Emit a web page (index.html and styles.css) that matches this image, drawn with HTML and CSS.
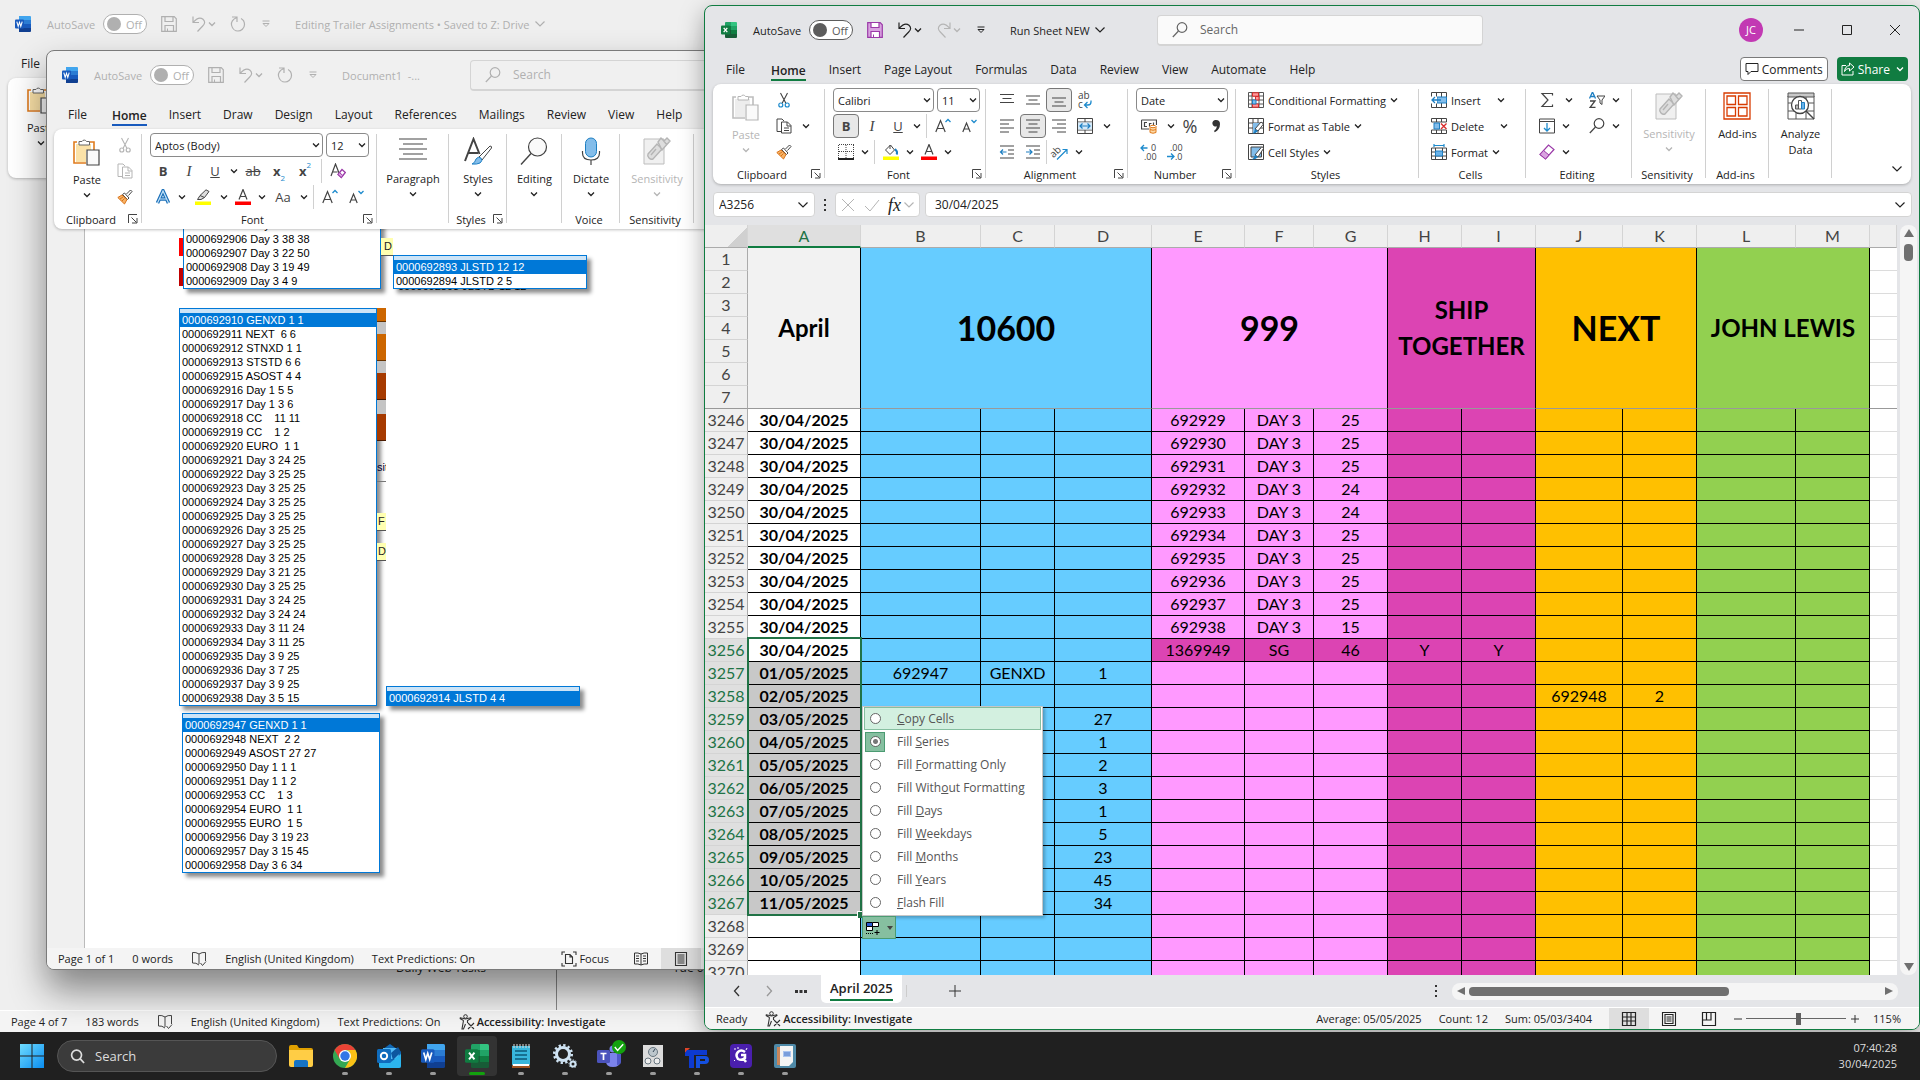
FILE: index.html
```html
<!DOCTYPE html>
<html lang="en-GB">
<head>
  <meta charset="UTF-8" />
  <title>Run Sheet NEW</title>
  <link rel="stylesheet" href="styles.css">
</head>
<body>
  <!-- icon sprite -->
  <svg class="sprite" aria-hidden="true">
    <symbol id="caret" viewBox="0 0 8 8"><path d="M1 2.5 4 5.5 7 2.5" fill="none" stroke="currentColor" stroke-width="1.3"/></symbol>
    <symbol id="chev" viewBox="0 0 12 12"><path d="M1.5 3.5 6 8 10.5 3.5" fill="none" stroke="currentColor" stroke-width="1.2"/></symbol>
    <symbol id="custom" viewBox="0 0 8 8"><path d="M.5 1h7M1 3.5 4 6.5 7 3.5z" fill="none" stroke="currentColor"/></symbol>
    <symbol id="word" viewBox="0 0 16 16"><path d="M4 0h11q1 0 1 1v3H4z" fill="#41a5ee"/><path d="M4 4h12v4H4z" fill="#2b7cd3"/><path d="M4 8h12v4H4z" fill="#185abd"/><path d="M4 12h12v3q0 1-1 1H4z" fill="#103f91"/><rect y="3.500" width="9" height="9" rx="1" fill="#185abd"/><path d="M1.800 5.700 3.200 10.300 4.500 6.200 5.800 10.300 7.200 5.700" fill="none" stroke="#fff" stroke-width="1.100"/></symbol>
    <symbol id="excel" viewBox="0 0 16 16"><path d="M4 1q0-1 1-1h5v4H4z" fill="#21a366"/><path d="M10 0h5q1 0 1 1v3h-6z" fill="#33c481"/><path d="M4 4h6v4H4z" fill="#107c41"/><path d="M10 4h6v4h-6z" fill="#21a366"/><path d="M4 8h6v8H5q-1 0-1-1z" fill="#185c37"/><path d="M10 8h6v4h-6z" fill="#107c41"/><path d="M10 12h6v3q0 1-1 1h-5z" fill="#185c37"/><rect y="3.500" width="9" height="9" rx="1" fill="#107c41"/><path d="M2.700 5.800 6.300 10.200M6.300 5.800 2.700 10.200" stroke="#fff" stroke-width="1.300"/></symbol>
    <symbol id="save" viewBox="0 0 16 16"><path d="M.7.7h12.500l2.100 2.100v12.500H.7z" fill="var(--fill,none)" stroke="currentColor" stroke-width="1.200"/><path d="M4 1v4.500h8V1M4 15V9.500h8.500V15" fill="var(--fill2,none)" stroke="currentColor" stroke-width="1.200"/><path d="M6.500 12.500v2.500" stroke="currentColor"/></symbol>
    <symbol id="undo" viewBox="0 0 16 16"><path d="M2 .5v6h6M2.300 6.200C6 2 9 .8 12 3.300c2.500 2.200 1.800 4.700-.3 6.700L6.500 15.500" fill="none" stroke="currentColor" stroke-width="1.200"/></symbol>
    <symbol id="redo" viewBox="0 0 16 16"><path d="M14 .5v6H8M13.700 6.200C10 2 7 .8 4 3.300 1.500 5.500 2.200 8 4.300 10l5.200 5.500" fill="none" stroke="currentColor" stroke-width="1.200"/></symbol>
    <symbol id="repeat" viewBox="0 0 16 16"><path d="M2 1h5v5M7 1.500C2.500 3 1 6.500 1.500 9c.7 3.500 3.500 6 6.500 6s6.500-2.500 6.500-6.500c0-2.500-1.500-5-3.500-6" fill="none" stroke="currentColor" stroke-width="1.200"/></symbol>
    <symbol id="search" viewBox="0 0 16 16"><circle cx="10" cy="5.500" r="4.800" fill="none" stroke="currentColor" stroke-width="1.200"/><path d="M6.500 9 .8 15" stroke="currentColor" stroke-width="1.200"/></symbol>
    <symbol id="paste" viewBox="0 0 28 28"><path d="M4 4H1v21h12M17 4h4v8" fill="none" stroke="var(--edge,#e07b1c)" stroke-width="1.600"/><path d="M3 6h15v6h-5v12H3z" fill="var(--board,#fbe2a8)"/><path d="M6 7V3.500h3a2.500 2.500 0 0 1 4.500 0h3V7z" fill="#fff" stroke="var(--line,#666)"/><path d="M14 12h12v15H14z" fill="#fafafa" stroke="var(--line,#444)" stroke-width="1.200"/></symbol>
    <symbol id="cut" viewBox="0 0 16 16"><path d="M4.500 1 10 11.500M11.500 1 6 11.500" fill="none" stroke="currentColor" stroke-width="1.100"/><circle cx="4.800" cy="13" r="2" fill="none" stroke="var(--b,currentColor)" stroke-width="1.200"/><circle cx="11.200" cy="13" r="2" fill="none" stroke="var(--b,currentColor)" stroke-width="1.200"/></symbol>
    <symbol id="copy" viewBox="0 0 16 16"><path d="M5.500 13.500H1V1h5l2 2M5.500 4h6L15 7.500V15H5.500zM11 4v4h4M8 10h5M8 12.500h5" fill="none" stroke="currentColor"/></symbol>
    <symbol id="brush" viewBox="0 0 16 16"><path d="m9.500 5 4-4 1.500 1.500-3.500 4" fill="#fff" stroke="#444"/><path d="M7.500 4 12 9l-1.500 1.500L5.500 5.500z" fill="#fff" stroke="#444"/><path d="M5 6 .8 8.500 7.500 15 10 10.500z" fill="#f7b366" stroke="#d9731a"/><path d="m3 10 3-2M5 12l2.500-2.500" stroke="#d9731a"/></symbol>
    <symbol id="launch" viewBox="0 0 10 10"><path d="M.5 9V.5H9M3.500 3.500l5 5M9 4v5H4" fill="none" stroke="#444"/></symbol>
    <symbol id="clear" viewBox="0 0 16 16"><path d="M1 13 5.500 1 9 10M2.500 9h5" fill="none" stroke="#444" stroke-width="1.200"/><path d="m8 11.500 4-5 3.300 3-4 5z" fill="#fff" stroke="#9b3aa8" stroke-width="1.300"/><path d="m8 11.500 1.500-2 3.300 3-1.500 2z" fill="#d9a3e0" stroke="#9b3aa8"/></symbol>
    <symbol id="hilite" viewBox="0 0 16 16"><path d="M5 6.500 11 .8 14 2.500 9.500 8.500zM5 6.500 2.500 10.500H6L9.500 8.500" fill="#ddd" stroke="#444"/><path d="M0 12.500h16v3.500H0z" fill="#ff0"/></symbol>
    <symbol id="bucket" viewBox="0 0 16 16"><path d="m2.500 6 5-5 4 5-4.500 4.500zM7 1v4" fill="none" stroke="#444"/><path d="M12 5c2 2 2.500 4 1.500 5.500" fill="none" stroke="#1e7fc2" stroke-width="2"/><path d="M0 12.500h16v3.500H0z" fill="#ff0"/></symbol>
    <symbol id="fcolor" viewBox="0 0 16 16"><path d="M4 10.500 8 .5l4 10M5.200 7.500h5.600" fill="none" stroke="#444" stroke-width="1.200"/><path d="M0 12.500h16v3.500H0z" fill="red"/></symbol>
    <symbol id="effect" viewBox="0 0 16 16"><path d="M2.500 14 8 2l5.500 12M4.500 10h7" fill="none" stroke="#1a6fb8" stroke-width="3.600"/><path d="M2.500 14 8 2l5.500 12M4.500 10h7" fill="none" stroke="#c4e2f8" stroke-width="1.200"/></symbol>
    <symbol id="grow" viewBox="0 0 16 16"><path d="M.8 14 5.500 2.500 10.200 14M2.300 10.500h6.400" fill="none" stroke="#444" stroke-width="1.200"/><path d="m10.500 4 2.500-2.500L15.500 4" fill="none" stroke="#1e8bcd" stroke-width="1.300"/></symbol>
    <symbol id="shrink" viewBox="0 0 16 16"><path d="M1.800 14 5.500 5 9.200 14M3 11h5" fill="none" stroke="#444" stroke-width="1.200"/><path d="m10.500 2 2.500 2.500L15.500 2" fill="none" stroke="#1e8bcd" stroke-width="1.300"/></symbol>
    <symbol id="borders" viewBox="0 0 16 16"><path d="M.5 1v13M8 1v13M15.500 1v13M1 .5h15M1 7.500h15" fill="none" stroke="#444" stroke-dasharray="1 1"/><path d="M0 15h16" stroke="#222" stroke-width="2"/></symbol>
    <symbol id="vtop" viewBox="0 0 16 16"><path d="M1 2.500h14M3.500 6.500h9M1 10.500h14" stroke="#444" stroke-width="1.200"/></symbol>
    <symbol id="vmid" viewBox="0 0 16 16"><path d="M1 4h14M3.500 8h9M1 12h14" stroke="#444" stroke-width="1.200"/></symbol>
    <symbol id="vbot" viewBox="0 0 16 16"><path d="M1 6h14M3.500 10h9M1 14h14" stroke="#444" stroke-width="1.200"/></symbol>
    <symbol id="left" viewBox="0 0 16 16"><path d="M1 2h14M1 6h9M1 10h14M1 14h9" stroke="#444" stroke-width="1.200"/></symbol>
    <symbol id="center" viewBox="0 0 16 16"><path d="M1 2h14M3.500 6h9M1 10h14M3.500 14h9" stroke="#444" stroke-width="1.200"/></symbol>
    <symbol id="right" viewBox="0 0 16 16"><path d="M1 2h14M6 6h9M1 10h14M6 14h9" stroke="#444" stroke-width="1.200"/></symbol>
    <symbol id="merge" viewBox="0 0 16 16"><path d="M.5.500h15v15H.5zM8 .5v3.500M8 12v3.500M.5 4h15M.5 12h15" fill="none" stroke="#444"/><path d="M1 4.500h14v7H1z" fill="#d4eafa"/><path d="M3 8h10M5.500 5.500 3 8l2.500 2.500M10.500 5.500 13 8l-2.500 2.500" fill="none" stroke="#1e7fc2" stroke-width="1.200"/></symbol>
    <symbol id="outdent" viewBox="0 0 16 16"><path d="M1 2h14M9 6h6M9 10h6M1 14h14" stroke="#444" stroke-width="1.200"/><path d="M7.500 8H1.500M4 5.500 1.500 8 4 10.500" fill="none" stroke="#1e7fc2" stroke-width="1.200"/></symbol>
    <symbol id="indent" viewBox="0 0 16 16"><path d="M1 2h14M9 6h6M9 10h6M1 14h14" stroke="#444" stroke-width="1.200"/><path d="M1 8h6M4.500 5.500 7 8 4.500 10.500" fill="none" stroke="#1e7fc2" stroke-width="1.200"/></symbol>
    <symbol id="currency" viewBox="0 0 16 16"><path d="M.5 2h15v5M.5 2v9H8M6 4.500H3.500v4H6M8.500 8.500v-3h2M12.500 7V4.500" fill="none" stroke="#444" stroke-width="1.200"/><path d="M9 8.500v6q3 1.500 6 0v-6M9 11.500q3 1.500 6 0" fill="#fbd9a8" stroke="#e07b1c"/><ellipse cx="12" cy="8.500" rx="3" ry="1.200" fill="#fff" stroke="#e07b1c"/></symbol>
    <symbol id="cond" viewBox="0 0 16 16"><path d="M.5.500h15v15H.5zM.5 4h15M.5 8h15M.5 12h15M4 .5v15M11 .5v15" fill="#fff" stroke="#555"/><path d="M4.500.8h6v3.400h-6zM4.500 12h6v3.200h-6zM7.500 4.500h3.500v3.500H7.500z" fill="#ff9a9a" stroke="#d92c2c"/><path d="M4.500 8H8v4H4.500z" fill="#7cc0f0" stroke="#1e7fc2"/></symbol>
    <symbol id="fmttable" viewBox="0 0 16 16"><path d="M.5.500h15v15H.5zM.5 5h15M.5 10h15M5 .5v15M10 .5v15" fill="#fff" stroke="#444"/><path d="M5 5h9l-7 10H5z" fill="#83bdea"/><path d="m7 11 6-7 2.500 2L10 13z" fill="#fff" stroke="#444"/><path d="M4.500 15.500q2-1 2.500-4.500l3 2q-2 2.500-5.500 2.500z" fill="#1e7fc2"/></symbol>
    <symbol id="cellstyle" viewBox="0 0 16 16"><path d="M.5.500h15v15H.5z" fill="#fff" stroke="#444"/><path d="M3 3h10.500v10H3z" fill="#83bdea" stroke="#444"/><path d="m7 11 7-8.500 1.500 2L10 13z" fill="#fff" stroke="#444"/><path d="M3.500 15.500q2.500-1 3.500-4.500l3 2q-2 2.500-6.500 2.500z" fill="#1e7fc2"/></symbol>
    <symbol id="cinsert" viewBox="0 0 16 16"><path d="M.5.500h15v15H.5zM5.500.500v15M10.500.500v15" fill="#fff" stroke="#444"/><path d="M6 5h9.500v6H6z" fill="#83bdea" stroke="#1e7fc2"/><path d="M0 4.500h6v7H0z" fill="#fff"/><path d="M10 8H1M4 5 1 8l3 3" fill="none" stroke="#1e7fc2" stroke-width="1.300"/></symbol>
    <symbol id="cdelete" viewBox="0 0 16 16"><path d="M.5 4V.500h15V4M.5 12v3.500h15V12M5.500.500v3.500M10.500.500v3.500M5.500 12v3.500M10.500 12v3.500M.5 4h15M.5 12h15" fill="none" stroke="#444"/><path d="M3 5h5.500v6H3z" fill="#83bdea" stroke="#1e7fc2"/><path d="m10 5.500 5.500 5.500M15.500 5.500 10 11" stroke="#d92c2c" stroke-width="1.400"/></symbol>
    <symbol id="cformat" viewBox="0 0 16 16"><path d="M.5 4v11.500h15V4zM.5 8h15M.5 12h15M4.500 4v11.500M11.500 4v11.500" fill="#fff" stroke="#444"/><path d="M4.500 7h7v5h-7z" fill="#6bb2e8" stroke="#1e7fc2"/><path d="M3 1.500h10M3 0v3M13 0v3" stroke="#1e8bcd" stroke-width="1.200"/></symbol>
    <symbol id="sigma" viewBox="0 0 16 16"><path d="M13.500 3.500V1.500H3L9 8l-6 6.500h10.500v-2" fill="none" stroke="#444" stroke-width="1.200"/></symbol>
    <symbol id="sort" viewBox="0 0 16 16"><path d="m.5 6.500 3-6.500 3 6.500M1.500 4.500h4" fill="none" stroke="#1e7fc2" stroke-width="1.300"/><path d="M1 9h5L1 15.500h5.500" fill="none" stroke="#444" stroke-width="1.300"/><path d="M8 4h8l-3 4v4.500l-2-1.500V8z" fill="none" stroke="#444"/></symbol>
    <symbol id="filld" viewBox="0 0 16 16"><path d="M.5 1h15v14H.5zM.5 3.500h15" fill="none" stroke="#444"/><path d="M8 5v8M5 10l3 3 3-3" fill="none" stroke="#1e8bcd" stroke-width="1.300"/></symbol>
    <symbol id="eraser" viewBox="0 0 16 16"><path d="M1 10.500 9.500 1l5.500 4.500L6.500 15z" fill="#fff" stroke="#9b3aa8" stroke-width="1.200"/><path d="M1 10.500 4.500 6.500 10 11l-3.500 4z" fill="#d9a3e0" stroke="#9b3aa8"/></symbol>
    <symbol id="sens" viewBox="0 0 28 28"><path d="M1 2h20v25H1z" fill="#f0f0f0" stroke="#bdbdbd"/><path d="m5 17 9-10 5 5-9 10q-2 1-4-1t-1-4zM8 18l5-6" fill="#ddd" stroke="#b5b5b5" stroke-width="1.400"/><path d="m15 5 3-4 3 3 3-3 3 3-8 9zM20 3l4 5" fill="#ddd" stroke="#b5b5b5" stroke-width="1.400"/></symbol>
    <symbol id="addins" viewBox="0 0 28 28"><path d="M1 1h26v26H1zM4 4h8.500v8.500H4zM15.500 4H24v8.500h-8.500zM4 15.500h8.500V24H4zM15.500 15.500H24V24h-8.500z" fill="none" stroke="#d83b01" stroke-width="1.300"/></symbol>
    <symbol id="analyze" viewBox="0 0 28 28"><path d="M1 4h26v23H1zM1 11h26M1 19h26M9 4v23M19 4v23" fill="#fff" stroke="#555"/><path d="M1 1h26v4H1z" fill="#c8c8c8" stroke="#555"/><circle cx="13" cy="13" r="8.500" fill="#fff" stroke="#444" stroke-width="1.300"/><path d="m19 19 8 8" stroke="#444" stroke-width="1.500"/><path d="M8.500 13h3v4h-3z" fill="#bbb" stroke="#555"/><path d="M11.500 8.500h3v8.500h-3z" fill="#fff" stroke="#555"/><path d="M14.500 10.500h3v6.500h-3z" fill="#6bb2e8" stroke="#1e7fc2"/></symbol>
    <symbol id="para" viewBox="0 0 28 28"><path d="M0 2h28M4 7h20M0 12h28M4 17h20M0 22h28" stroke="#444" stroke-width="1.200"/></symbol>
    <symbol id="styles" viewBox="0 0 28 28"><path d="M1 24 9.500 2l6 15M4 16h10" fill="none" stroke="#444" stroke-width="2"/><path d="m15 20 11-11q2 0 1.500 2L18 23z" fill="#fff" stroke="#444"/><path d="M8 27q3-1 4-5 2-3 5-1 2 3-1 5-3 1.500-8 1z" fill="#83bdea" stroke="#1e7fc2"/></symbol>
    <symbol id="find" viewBox="0 0 28 28"><circle cx="17.500" cy="10" r="9" fill="#fafafa" stroke="#444" stroke-width="1.200"/><path d="M11 16.500 1 27.500" stroke="#444" stroke-width="1.400"/></symbol>
    <symbol id="mic" viewBox="0 0 28 28"><rect x="8.500" y="1" width="11" height="19" rx="5.500" fill="#83bdea" stroke="#1e7fc2"/><path d="M5.500 14v2q0 7 8.500 7t8.500-7v-2M14 23v5" fill="none" stroke="#444" stroke-width="1.200"/></symbol>
    <symbol id="comment" viewBox="0 0 14 14"><path d="M1 1.500h12v8H6l-3 3v-3H1z" fill="none" stroke="currentColor"/></symbol>
    <symbol id="share" viewBox="0 0 14 14"><path d="M5 3.500H1v9.500h11V9M8.500 1 13 5 8.500 9V6.500Q5 6 3.500 9.500 4 4 8.500 3.500z" fill="none" stroke="currentColor"/></symbol>
    <symbol id="book" viewBox="0 0 16 16"><path d="M8 3Q5 1 1.500 1.500V12q3.500-.5 6.500 2M8 3v10M8 3q3-2 6.500-1.500V10M9.500 12l2 2.500 3.500-4" fill="none" stroke="#444"/></symbol>
    <symbol id="access" viewBox="0 0 16 16"><circle cx="6.500" cy="2.500" r="1.800" fill="none" stroke="#333"/><path d="M1 4.500q0-1 1.500-.5l4 1 4-1Q12 3.500 12 4.500L8.500 6.500V9M4.500 6.500 3 15h1.500L6.500 10M1 4.500l3.500 2M9 9l6 6M15 9l-6 6" fill="none" stroke="#333" stroke-width="1.100"/></symbol>
    <symbol id="focus" viewBox="0 0 16 16"><path d="M1 4V1h3M12 1h3v3M15 12v3h-3M4 15H1v-3M4.500 3.500h4.500l2.500 2.500v6.500h-7zM9 3.500V6h2.500" fill="none" stroke="#333" stroke-width="1.100"/></symbol>
    <symbol id="read" viewBox="0 0 16 16"><path d="M8 3Q5 1.500 1.500 2v11q3.500-.5 6.500 1 3-1.500 6.500-1V2Q11 1.500 8 3zv11M3 5h3M3 7.500h3M3 10h3M10 5h3M10 7.500h3M10 10h3" fill="none" stroke="#333"/></symbol>
    <symbol id="print" viewBox="0 0 16 16"><path d="M2.500 1.500h11v13h-11zM4.500 4h7M4.500 6h7M4.500 8h7M4.500 10h7M4.500 12h7" fill="none" stroke="#333" stroke-width="1.100"/></symbol>
    <symbol id="vnormal" viewBox="0 0 16 16"><path d="M1.500 1.500h13v13h-13zM1.500 6h13M1.500 10h13M6 1.500v13M10 1.500v13" fill="none" stroke="#222" stroke-width="1.200"/></symbol>
    <symbol id="vlayout" viewBox="0 0 16 16"><path d="M1.500 1.500h13v13h-13zM4 3.500h8v9H4zM5.500 6h5M5.500 8h5M5.500 10h5" fill="none" stroke="#222" stroke-width="1.100"/></symbol>
    <symbol id="vbreak" viewBox="0 0 16 16"><path d="M1.500 1.500h13v13h-13zM1.500 9h8.500V1.500M5.500 1.500V9" fill="none" stroke="#222" stroke-width="1.200"/></symbol>
    <symbol id="autofill" viewBox="0 0 16 16"><path d="M1.500 2.500h6v4h-6z" fill="#2a5bd0" stroke="#000"/><path d="M7.500 2.500h6v4h-6zM1.500 6.500h6v4h-6z" fill="#fff" stroke="#000"/><path d="M1 13.500h7" stroke="#000" stroke-dasharray="1 1"/><path d="M12 10v5M9.500 12.500h5" stroke="#000"/></symbol>
  </svg>

  <div class="desktop">
    <!-- background document -->
    <section class="window word back">
      <header class="titlebar">
        <div class="quick">
          <svg class="i16"><use href="#word"/></svg>
          <label class="autosave">AutoSave <input type="checkbox"><span class="toggle">Off</span></label>
          <svg class="i16"><use href="#save"/></svg>
          <span class="split"><svg class="i16"><use href="#undo"/></svg><svg class="i8"><use href="#caret"/></svg></span>
          <svg class="i16"><use href="#repeat"/></svg>
          <svg class="i8 custom"><use href="#custom"/></svg>
          <span class="doc-name">Editing Trailer Assignments &bull; Saved to Z: Drive <svg class="i12"><use href="#chev"/></svg></span>
        </div>
      </header>
      <nav class="tabs"><button>File</button></nav>
      <div class="ribbon">
        <div class="group"><div class="body"><button class="big"><svg class="i28"><use href="#paste"/></svg>Paste<svg class="i8"><use href="#caret"/></svg></button></div></div>
      </div>
      <div class="back-page">
        <div class="back-row"><span class="back-cell">Daily Web Tasks</span><span class="back-cell">Tue 01/04</span></div>
      </div>
      <footer class="status">
        <span>Page 4 of 7</span><span>183 words</span><svg class="i16"><use href="#book"/></svg>
        <span>English (United Kingdom)</span><span>Text Predictions: On</span>
        <span class="access"><svg class="i16"><use href="#access"/></svg>Accessibility: Investigate</span>
      </footer>
    </section>

    <!-- Document1 -->
    <section class="window word front">
      <header class="titlebar">
        <div class="quick">
          <svg class="i16"><use href="#word"/></svg>
          <label class="autosave">AutoSave <input type="checkbox"><span class="toggle">Off</span></label>
          <svg class="i16"><use href="#save"/></svg>
          <span class="split"><svg class="i16"><use href="#undo"/></svg><svg class="i8"><use href="#caret"/></svg></span>
          <svg class="i16"><use href="#repeat"/></svg>
          <svg class="i8 custom"><use href="#custom"/></svg>
          <span class="doc-name">Document1&nbsp; -...</span>
        </div>
        <label class="search"><svg class="i16"><use href="#search"/></svg><input type="text" placeholder="Search" aria-label="Search"></label>
      </header>
      <nav class="tabs">
        <button>File</button><button class="active">Home</button><button>Insert</button><button>Draw</button><button>Design</button><button>Layout</button><button>References</button><button>Mailings</button><button>Review</button><button>View</button><button>Help</button>
      </nav>
      <div class="ribbon">
        <div class="group w-clip">
          <div class="body">
            <button class="big"><svg class="i28"><use href="#paste"/></svg>Paste<svg class="i8"><use href="#caret"/></svg></button>
            <div class="rows">
              <div class="row"><button class="ib off"><svg class="i16"><use href="#cut"/></svg></button></div>
              <div class="row"><button class="ib off"><svg class="i16"><use href="#copy"/></svg></button></div>
              <div class="row"><button class="ib"><svg class="i16"><use href="#brush"/></svg></button></div>
            </div>
          </div>
          <div class="label"><span>Clipboard</span><svg class="i10"><use href="#launch"/></svg></div>
        </div>
        <div class="group w-font">
          <div class="body">
            <div class="rows">
              <div class="row gap">
                <span class="combo combo-wide"><select aria-label="Font"><option>Aptos (Body)</option></select><svg class="i8"><use href="#caret"/></svg></span>
                <span class="combo combo-size"><select aria-label="Font size"><option>12</option></select><svg class="i8"><use href="#caret"/></svg></span>
              </div>
              <div class="row">
                <button class="ib"><b>B</b></button><button class="ib"><i>I</i></button><button class="ib"><u>U</u></button><button class="dd"><svg class="i8"><use href="#caret"/></svg></button>
                <button class="ib"><s>ab</s></button><button class="ib"><b>x</b><sub>2</sub></button><button class="ib"><b>x</b><sup>2</sup></button><span class="sep"></span>
                <button class="ib"><svg class="i16"><use href="#clear"/></svg></button>
              </div>
              <div class="row">
                <button class="ib"><svg class="i16"><use href="#effect"/></svg></button><button class="dd"><svg class="i8"><use href="#caret"/></svg></button>
                <button class="ib wide"><svg class="i16"><use href="#hilite"/></svg></button><button class="dd"><svg class="i8"><use href="#caret"/></svg></button>
                <button class="ib"><svg class="i16"><use href="#fcolor"/></svg></button><button class="dd"><svg class="i8"><use href="#caret"/></svg></button>
                <button class="ib wide">Aa</button><button class="dd"><svg class="i8"><use href="#caret"/></svg></button><span class="sep"></span>
                <button class="ib"><svg class="i16"><use href="#grow"/></svg></button><button class="ib"><svg class="i16"><use href="#shrink"/></svg></button>
              </div>
            </div>
          </div>
          <div class="label"><span>Font</span><svg class="i10"><use href="#launch"/></svg></div>
        </div>
        <div class="group w-para"><div class="body mid"><button class="big"><svg class="i28"><use href="#para"/></svg>Paragraph<svg class="i8"><use href="#caret"/></svg></button></div></div>
        <div class="group w-styles"><div class="body mid"><button class="big"><svg class="i28"><use href="#styles"/></svg>Styles<svg class="i8"><use href="#caret"/></svg></button></div><div class="label"><span>Styles</span><svg class="i10"><use href="#launch"/></svg></div></div>
        <div class="group w-edit"><div class="body mid"><button class="big"><svg class="i28"><use href="#find"/></svg>Editing<svg class="i8"><use href="#caret"/></svg></button></div></div>
        <div class="group w-styles"><div class="body mid"><button class="big"><svg class="i28"><use href="#mic"/></svg>Dictate<svg class="i8"><use href="#caret"/></svg></button></div><div class="label"><span>Voice</span></div></div>
        <div class="group w-sens"><div class="body mid"><button class="big off" disabled><svg class="i28"><use href="#sens"/></svg>Sensitivity<svg class="i8"><use href="#caret"/></svg></button></div><div class="label"><span>Sensitivity</span></div></div>
      </div>
      <div class="canvas">
        <div class="page">
          <div class="snips first">
            <div class="scrap scrap-left"><i class="h9"></i><i class="red h18"></i><i class="h12"></i><i class="darkred h18"></i></div>
            <ul class="drop" id="list1"></ul>
            <div class="scrap scrap-d"><i class="h9"></i><i class="note">D</i></div>
            <div>
              <ul class="drop narrow" id="list2"></ul>
              <div class="under"><span>0000692893 JLSTD 12 12</span></div>
            </div>
          </div>
          <div class="snips second">
            <ul class="drop" id="list3"></ul>
            <div class="scrap scrap-right">
              <i class="orange h14"></i><i class="grey h12"></i><i class="orange h27"></i><i class="grey h12"></i><i class="brown h27"></i><i class="grey h14"></i><i class="brown h27"></i><i class="h12"></i>
              <i class="word-bit">sit</i><i class="h27"></i><i class="h4"></i><i class="note">F</i><i class="h12"></i><i class="note">D</i>
            </div>
            <ul class="drop narrow" id="list4"></ul>
          </div>
          <div class="snips third">
            <ul class="drop" id="list5"></ul>
          </div>
        </div>
      </div>
      <footer class="status">
        <span>Page 1 of 1</span><span>0 words</span><svg class="i16"><use href="#book"/></svg>
        <span>English (United Kingdom)</span><span>Text Predictions: On</span>
        <span class="views">
          <button class="focus"><svg class="i16"><use href="#focus"/></svg>Focus</button>
          <button class="view"><svg class="i16"><use href="#read"/></svg></button>
          <button class="view on"><svg class="i16"><use href="#print"/></svg></button>
          <span class="view"></span>
        </span>
      </footer>
    </section>

    <!-- Excel -->
    <section class="window excel">
      <header class="titlebar">
        <div class="quick">
          <svg class="i16"><use href="#excel"/></svg>
          <label class="autosave">AutoSave <input type="checkbox"><span class="toggle">Off</span></label>
          <svg class="i16 save"><use href="#save"/></svg>
          <span class="split"><svg class="i16"><use href="#undo"/></svg><svg class="i8"><use href="#caret"/></svg></span>
          <span class="split off"><svg class="i16"><use href="#redo"/></svg><svg class="i8"><use href="#caret"/></svg></span>
          <svg class="i8 custom"><use href="#custom"/></svg>
          <span class="doc-name">Run Sheet NEW <svg class="i12"><use href="#chev"/></svg></span>
        </div>
        <label class="search"><svg class="i16"><use href="#search"/></svg><input type="text" placeholder="Search" aria-label="Search"></label>
        <div class="winbtns">
          <button><span class="avatar">JC</span></button>
          <button><svg class="i12"><path d="M1 6h10" stroke="#222"/></svg></button>
          <button><svg class="i12"><path d="M1.500 1.500h9v9h-9z" fill="none" stroke="#222"/></svg></button>
          <button><svg class="i12"><path d="m1 1 10 10M11 1 1 11" stroke="#222"/></svg></button>
        </div>
      </header>
      <nav class="tabs">
        <button>File</button><button class="active">Home</button><button>Insert</button><button>Page Layout</button><button>Formulas</button><button>Data</button><button>Review</button><button>View</button><button>Automate</button><button>Help</button>
        <span class="tab-actions">
          <button class="comments"><svg class="i14"><use href="#comment"/></svg>Comments</button>
          <button class="share"><svg class="i14"><use href="#share"/></svg>Share<svg class="i8"><use href="#caret"/></svg></button>
        </span>
      </nav>
      <div class="ribbon">
        <div class="group x-clip">
          <div class="body">
            <button class="big off" disabled><svg class="i28 faded"><use href="#paste"/></svg>Paste<svg class="i8"><use href="#caret"/></svg></button>
            <div class="rows">
              <div class="row"><button class="ib tint"><svg class="i16"><use href="#cut"/></svg></button></div>
              <div class="row"><button class="ib"><svg class="i16"><use href="#copy"/></svg></button><button class="dd push"><svg class="i8"><use href="#caret"/></svg></button></div>
              <div class="row"><button class="ib"><svg class="i16"><use href="#brush"/></svg></button></div>
            </div>
          </div>
          <div class="label"><span>Clipboard</span><svg class="i10"><use href="#launch"/></svg></div>
        </div>
        <div class="group x-font">
          <div class="body">
            <div class="rows">
              <div class="row gap">
                <span class="combo combo-mid"><select aria-label="Font"><option>Calibri</option></select><svg class="i8"><use href="#caret"/></svg></span>
                <span class="combo combo-size"><select aria-label="Font size"><option>11</option></select><svg class="i8"><use href="#caret"/></svg></span>
              </div>
              <div class="row">
                <button class="ib on"><b>B</b></button><button class="ib"><i>I</i></button><button class="ib"><u>U</u></button><button class="dd"><svg class="i8"><use href="#caret"/></svg></button><span class="sep"></span>
                <button class="ib"><svg class="i16"><use href="#grow"/></svg></button><button class="ib"><svg class="i16"><use href="#shrink"/></svg></button>
              </div>
              <div class="row">
                <button class="ib"><svg class="i16"><use href="#borders"/></svg></button><button class="dd"><svg class="i8"><use href="#caret"/></svg></button><span class="sep"></span>
                <button class="ib"><svg class="i16"><use href="#bucket"/></svg></button><button class="dd"><svg class="i8"><use href="#caret"/></svg></button>
                <button class="ib"><svg class="i16"><use href="#fcolor"/></svg></button><button class="dd"><svg class="i8"><use href="#caret"/></svg></button>
              </div>
            </div>
          </div>
          <div class="label"><span>Font</span><svg class="i10"><use href="#launch"/></svg></div>
        </div>
        <div class="group x-align">
          <div class="body">
            <div class="rows">
              <div class="row"><button class="ib"><svg class="i16"><use href="#vtop"/></svg></button><button class="ib"><svg class="i16"><use href="#vmid"/></svg></button><button class="ib on"><svg class="i16"><use href="#vbot"/></svg></button><button class="ib"><svg class="i16" viewBox="0 0 16 16"><text x="1" y="7" font-size="10" fill="#444">ab</text><text x="1" y="15.500" font-size="10" fill="#444">c</text><path d="M14 8.500v1.500q0 3-3 3H7.500M10.500 10l-3 3 3 3" fill="none" stroke="#1e8bcd" stroke-width="1.300"/></svg></button></div>
              <div class="row"><button class="ib"><svg class="i16"><use href="#left"/></svg></button><button class="ib on"><svg class="i16"><use href="#center"/></svg></button><button class="ib"><svg class="i16"><use href="#right"/></svg></button><button class="ib"><svg class="i16"><use href="#merge"/></svg></button><button class="dd push"><svg class="i8"><use href="#caret"/></svg></button></div>
              <div class="row"><button class="ib"><svg class="i16"><use href="#outdent"/></svg></button><button class="ib"><svg class="i16"><use href="#indent"/></svg></button><span class="sep tight"></span><button class="ib"><svg class="i16" viewBox="0 0 16 16"><text x="-2" y="10" font-size="10" fill="#444" transform="rotate(-45 5 8)">ab</text><path d="m5 15.500 10-10M10.500 5.500H15V10" fill="none" stroke="#1e8bcd" stroke-width="1.200"/></svg></button><button class="dd"><svg class="i8"><use href="#caret"/></svg></button></div>
            </div>
          </div>
          <div class="label"><span>Alignment</span><svg class="i10"><use href="#launch"/></svg></div>
        </div>
        <div class="group x-num">
          <div class="body">
            <div class="rows">
              <div class="row"><span class="combo combo-num"><select aria-label="Number format"><option>Date</option></select><svg class="i8"><use href="#caret"/></svg></span></div>
              <div class="row"><button class="ib"><svg class="i16"><use href="#currency"/></svg></button><button class="dd push"><svg class="i8"><use href="#caret"/></svg></button><button class="ib pct">%</button><button class="ib"><svg class="i16" viewBox="0 0 16 16"><path d="M8 2a3.300 3.300 0 1 0 1 6.300Q8.500 11.500 6 13l.8 1.200Q12 11.500 12 6a4 4 0 0 0-4-4z" fill="#333"/></svg></button></div>
              <div class="row"><button class="ib"><svg class="i16" viewBox="0 0 16 16"><path d="M6.500 4H0M3 1 0 4l3 3" fill="none" stroke="#1e8bcd" stroke-width="1.300"/><text x="10" y="7" font-size="9" fill="#444">0</text><text x="3" y="16" font-size="9" fill="#444">.00</text></svg></button><button class="ib"><svg class="i16" viewBox="0 0 16 16"><text x="3" y="7" font-size="9" fill="#444">.00</text><path d="M0 12.500h7M4 9.500l3 3-3 3" fill="none" stroke="#1e8bcd" stroke-width="1.300"/><text x="8" y="16" font-size="9" fill="#444">.0</text></svg></button></div>
            </div>
          </div>
          <div class="label"><span>Number</span><svg class="i10"><use href="#launch"/></svg></div>
        </div>
        <div class="group x-styles">
          <div class="body">
            <div class="rows">
              <div class="row"><button class="cmd"><svg class="i16"><use href="#cond"/></svg>Conditional Formatting<svg class="i8"><use href="#caret"/></svg></button></div>
              <div class="row"><button class="cmd"><svg class="i16"><use href="#fmttable"/></svg>Format as Table<svg class="i8"><use href="#caret"/></svg></button></div>
              <div class="row"><button class="cmd"><svg class="i16"><use href="#cellstyle"/></svg>Cell Styles<svg class="i8"><use href="#caret"/></svg></button></div>
            </div>
          </div>
          <div class="label"><span>Styles</span></div>
        </div>
        <div class="group x-cells">
          <div class="body">
            <div class="rows">
              <div class="row"><button class="cmd far"><svg class="i16"><use href="#cinsert"/></svg>Insert<svg class="i8"><use href="#caret"/></svg></button></div>
              <div class="row"><button class="cmd far"><svg class="i16"><use href="#cdelete"/></svg>Delete<svg class="i8"><use href="#caret"/></svg></button></div>
              <div class="row"><button class="cmd"><svg class="i16"><use href="#cformat"/></svg>Format<svg class="i8"><use href="#caret"/></svg></button></div>
            </div>
          </div>
          <div class="label"><span>Cells</span></div>
        </div>
        <div class="group x-editing">
          <div class="body">
            <div class="rows">
              <div class="row"><button class="ib"><svg class="i16"><use href="#sigma"/></svg></button><button class="dd push"><svg class="i8"><use href="#caret"/></svg></button></div>
              <div class="row"><button class="ib"><svg class="i16"><use href="#filld"/></svg></button><button class="dd"><svg class="i8"><use href="#caret"/></svg></button></div>
              <div class="row"><button class="ib"><svg class="i16"><use href="#eraser"/></svg></button><button class="dd"><svg class="i8"><use href="#caret"/></svg></button></div>
            </div>
            <div class="rows">
              <div class="row"><button class="ib"><svg class="i16"><use href="#sort"/></svg></button><button class="dd"><svg class="i8"><use href="#caret"/></svg></button></div>
              <div class="row"><button class="ib"><svg class="i16"><use href="#search"/></svg></button><button class="dd"><svg class="i8"><use href="#caret"/></svg></button></div>
            </div>
          </div>
          <div class="label"><span>Editing</span></div>
        </div>
        <div class="group w-sens"><div class="body mid"><button class="big off" disabled><svg class="i28"><use href="#sens"/></svg>Sensitivity<svg class="i8"><use href="#caret"/></svg></button></div><div class="label"><span>Sensitivity</span></div></div>
        <div class="group x-addins"><div class="body mid"><button class="big"><svg class="i28"><use href="#addins"/></svg>Add-ins</button></div><div class="label"><span>Add-ins</span></div></div>
        <div class="group x-addins"><div class="body mid"><button class="big"><svg class="i28"><use href="#analyze"/></svg><span>Analyze<br>Data</span></button></div></div>
        <button class="collapse" aria-label="Collapse ribbon"><svg class="i12"><use href="#chev"/></svg></button>
      </div>

      <div class="formula-bar">
        <div class="box name-box"><input type="text" value="A3256" aria-label="Name box"><svg class="i12"><use href="#chev"/></svg></div>
        <svg class="grip" viewBox="0 0 10 16"><path d="M4 2h2v2H4zM4 7h2v2H4zM4 12h2v2H4z" fill="#333"/></svg>
        <div class="box fx">
          <svg class="i16 off"><path d="m2 2 12 12M14 2 2 14" stroke="currentColor"/></svg>
          <svg class="i16 off"><path d="m1 9 5 5L15 3" fill="none" stroke="currentColor"/></svg>
          <span class="fx-sign">fx</span><svg class="i12 off"><use href="#chev"/></svg>
        </div>
        <div class="box formula"><input type="text" value="30/04/2025" aria-label="Formula"><svg class="i12"><use href="#chev"/></svg></div>
      </div>

      <div class="sheet-area">
        <div class="sheet">
          <table class="grid">
            <colgroup>
              <col class="c-head"><col class="c-a"><col class="c-b"><col class="c-74"><col class="c-d"><col class="c-e"><col class="c-f"><col class="c-74"><col class="c-74"><col class="c-74"><col class="c-j"><col class="c-74"><col class="c-l"><col class="c-74"><col>
            </colgroup>
            <thead>
              <tr><th class="corner"></th><th class="sel">A</th><th>B</th><th>C</th><th>D</th><th>E</th><th>F</th><th>G</th><th>H</th><th>I</th><th>J</th><th>K</th><th>L</th><th>M</th><th></th></tr>
            </thead>
            <tbody class="frozen">
              <tr>
                <th>1</th>
                <td class="month" rowspan="7">April</td>
                <td class="blue xl" rowspan="7" colspan="3">10600</td>
                <td class="pink xl" rowspan="7" colspan="3">999</td>
                <td class="magenta" rowspan="7" colspan="2">SHIP TOGETHER</td>
                <td class="amber xl" rowspan="7" colspan="2">NEXT</td>
                <td class="green" rowspan="7" colspan="2">JOHN LEWIS</td>
                <td></td>
              </tr>
              <tr><th>2</th><td></td></tr>
              <tr><th>3</th><td></td></tr>
              <tr><th>4</th><td></td></tr>
              <tr><th>5</th><td></td></tr>
              <tr><th>6</th><td></td></tr>
              <tr><th>7</th><td></td></tr>
            </tbody>
            <tbody id="rows"></tbody>
          </table>
          <div class="selection"></div>
          <fieldset class="fill-menu" id="fillMenu"></fieldset>
          <button class="fill-btn" aria-label="Auto fill options"><svg class="i16"><use href="#autofill"/></svg><svg class="tri" viewBox="0 0 6 4"><path d="M0 0h6L3 4z" fill="#444"/></svg></button>
        </div>
        <div class="vscroll">
          <svg class="i10" viewBox="0 0 10 10"><path d="M5 1 10 9H0z" fill="#707070"/></svg>
          <div class="thumb"></div>
          <svg class="i10 end" viewBox="0 0 10 10"><path d="M5 9 10 1H0z" fill="#707070"/></svg>
        </div>
      </div>

      <div class="sheet-tabs">
        <button class="nav"><svg class="i12"><path d="M8 1 3.500 6 8 11" fill="none" stroke="#333" stroke-width="1.300"/></svg></button>
        <button class="nav"><svg class="i12"><path d="M4 1 8.500 6 4 11" fill="none" stroke="#999" stroke-width="1.300"/></svg></button>
        <button class="nav"><svg class="i12"><path d="M0 5h3v3H0zM4.500 5h3v3h-3zM9 5h3v3H9z" fill="#333"/></svg></button>
        <button class="sheet-tab"><span>April 2025</span></button>
        <button class="add"><svg class="i12"><path d="M6 0v12M0 6h12" stroke="#333"/></svg></button>
        <svg class="grip" viewBox="0 0 10 16"><path d="M4 2h2v2H4zM4 7h2v2H4zM4 12h2v2H4z" fill="#333"/></svg>
        <div class="hscroll">
          <svg class="i8" viewBox="0 0 8 8"><path d="M8 0v8L0 4z" fill="#707070"/></svg>
          <div class="track"><div class="thumb"></div></div>
          <svg class="i8" viewBox="0 0 8 8"><path d="M0 0v8l8-4z" fill="#707070"/></svg>
        </div>
      </div>
      <footer class="status">
        <span>Ready</span>
        <span class="access"><svg class="i16"><use href="#access"/></svg>Accessibility: Investigate</span>
        <span class="views">
          <span class="stat">Average: 05/05/2025</span><span class="stat">Count: 12</span><span class="stat">Sum: 05/03/3404</span>
          <button class="view on"><svg class="i16"><use href="#vnormal"/></svg></button>
          <button class="view"><svg class="i16"><use href="#vlayout"/></svg></button>
          <button class="view"><svg class="i16"><use href="#vbreak"/></svg></button>
          <button class="zoom-btn"><svg class="i8"><path d="M0 4h8" stroke="#333"/></svg></button>
          <input class="zoom" type="range" min="0" max="100" value="53" aria-label="Zoom">
          <button class="zoom-btn"><svg class="i8"><path d="M0 4h8M4 0v8" stroke="#333"/></svg></button>
          <span class="pct-label">115%</span>
        </span>
      </footer>
    </section>
  </div>

  <div class="taskbar">
    <button class="start"><svg viewBox="0 0 24 24"><defs><linearGradient id="win" x1="0" y1="0" x2="1" y2="1"><stop offset="0" stop-color="#6fdcff"/><stop offset="1" stop-color="#0a8df0"/></linearGradient></defs><path d="M0 0h11.500v11.500H0zM12.500 0H24v11.500H12.500zM0 12.500h11.500V24H0zM12.500 12.500H24V24H12.500z" fill="url(#win)"/></svg></button>
    <label class="task-search"><svg viewBox="0 0 16 16"><circle cx="7" cy="6.500" r="5.300" fill="none" stroke="#ddd" stroke-width="1.800"/><path d="m11 10.500 4 4.500" stroke="#ddd" stroke-width="1.800"/></svg><input type="text" placeholder="Search" aria-label="Taskbar search"></label>
    <button class="app idle"><svg viewBox="0 0 24 24"><path d="M0 3q0-2 2-2h6l2 3h12q2 0 2 2v4H0z" fill="#e0a000"/><path d="M0 6h24v15q0 2-2 2H2q-2 0-2-2z" fill="#ffcd45"/><path d="M5 23v-5q0-2 2-2h10q2 0 2 2v5z" fill="#1673c4"/></svg></button>
    <button class="app"><svg viewBox="0 0 24 24"><circle cx="12" cy="12" r="12" fill="#34a853"/><path d="M12 0a12 12 0 0 1 10.400 6H12L6.800 15 1.600 6A12 12 0 0 1 12 0z" fill="#ea4335"/><path d="M22.400 6A12 12 0 0 1 12 24l5.200-9L17 8l-3-2z" fill="#fbc116"/><circle cx="12" cy="12" r="6" fill="#fff"/><circle cx="12" cy="12" r="4.700" fill="#3277e6"/></svg></button>
    <button class="app"><svg viewBox="0 0 24 24"><path d="M2 8 13 0l11 8v14q0 2-2 2H4q-2 0-2-2z" fill="#1068b5"/><path d="M6 4h15l1 11H6z" fill="#50b8f5"/><path d="m14 9 7-6 3 5-8 8z" fill="#0d56a0"/><path d="m2 13 12 5 10-8v12q0 2-2 2H4q-2 0-2-2z" fill="#2cb5ee"/><rect y="5" width="14" height="14" rx="1.500" fill="#0f6cbd"/><circle cx="7" cy="12" r="3.200" fill="none" stroke="#fff" stroke-width="1.900"/></svg></button>
    <button class="app"><svg viewBox="0 0 16 16"><use href="#word"/></svg></button>
    <button class="app current"><svg viewBox="0 0 16 16"><use href="#excel"/></svg></button>
    <button class="app"><svg viewBox="0 0 24 24"><path d="M3 2h18v20H3z" fill="#38b6dc"/><path d="M3 21h18v3H3z" fill="#a15422"/><path d="M4 20h16v2H4z" fill="#fff"/><path d="M6 7h12M6 11h12M6 15h12" stroke="#0c5a78" stroke-width="1.600"/><path d="M5 0v4M8 0v4M11 0v4M14 0v4M17 0v4M20 0v4" stroke="#ddd"/></svg></button>
    <button class="app"><svg viewBox="0 0 24 24"><circle cx="10" cy="10" r="6.500" fill="none" stroke="#cfe3f3" stroke-width="3"/><circle cx="10" cy="10" r="8.800" fill="none" stroke="#cfe3f3" stroke-width="2.500" stroke-dasharray="2.300 2.300"/><circle cx="20" cy="20" r="2.500" fill="none" stroke="#cfe3f3" stroke-width="2"/><circle cx="20" cy="20" r="4" fill="none" stroke="#cfe3f3" stroke-dasharray="1.500 1.500"/></svg></button>
    <button class="app"><svg viewBox="0 0 24 24"><circle cx="16" cy="5" r="3.500" fill="#7b83eb"/><path d="M9 9h14v8q0 6-7 6t-7-6z" fill="#7b83eb"/><path d="M20 10h4v8q0 3-4 3z" fill="#5059c9"/><rect y="6" width="13" height="13" rx="1.500" fill="#4b53bc"/><path d="M3.500 9.500h6M6.500 9.500v6.500" stroke="#fff" stroke-width="1.700"/></svg><span class="badge"><svg viewBox="0 0 10 10"><path d="m2 5 2 2.500L8 3" fill="none" stroke="#fff"/></svg></span></button>
    <button class="app"><svg viewBox="0 0 24 24"><path d="M2 1h20v22H2z" fill="#dcdcdc"/><circle cx="12" cy="8" r="4.500" fill="#bcc6cc" stroke="#687680"/><circle cx="7" cy="17" r="3" fill="#eee" stroke="#687680"/><circle cx="16" cy="17" r="3" fill="#eee" stroke="#687680"/><path d="m12 8 2-3" stroke="#345"/></svg></button>
    <button class="app"><svg viewBox="0 0 24 24"><path d="M0 4h5l-5 5z" fill="#e0452a"/><path d="M2 6h20v5H9v13H4V12H0V9z" fill="#0d3ad0"/><path d="M11 12h9q4 0 4 4t-4 4h-5v4h-4zM15 15v2h5v-2z" fill="#1450e0" fill-rule="evenodd"/></svg></button>
    <button class="app"><svg viewBox="0 0 24 24"><rect x="1" y="0" width="22" height="24" rx="4" fill="#4a1fae"/><path d="M16 8q-4-3-7 0t0 7q4 2 7-1v-3h-4M14 14l3 4" fill="none" stroke="#fff" stroke-width="2.500"/><path d="M6 4v2M9 3v2M18 4l-1 2M5 17l1-1" stroke="#fff"/></svg></button>
    <button class="app"><svg viewBox="0 0 24 24"><rect x="1" y="0" width="22" height="24" rx="2" fill="#4f8aa8"/><path d="M4 3h4v18H4z" fill="#c9855a"/><path d="M7 2h13v16l-4 4H7z" fill="#f4f4f4"/><path d="M10 7h8v6h-8z" fill="#a9c4ef"/><path d="M11 9h6M11 11h6" stroke="#4a78c8"/></svg></button>
    <div class="clock"><span>07:40:28</span><span>30/04/2025</span></div>
  </div>

  <script>
    // drop-down lists pasted into the document; the first item is highlighted unless plain
    const lists = {
      list1: { plain: true, items: ['0000692905 Day 3 40 40', '0000692906 Day 3 38 38', '0000692907 Day 3 22 50', '0000692908 Day 3 19 49', '0000692909 Day 3 4 9'] },
      list2: { items: ['0000692893 JLSTD 12 12', '0000692894 JLSTD 2 5'] },
      list3: { items: ['0000692910 GENXD 1 1', '0000692911 NEXT  6 6', '0000692912 STNXD 1 1', '0000692913 STSTD 6 6', '0000692915 ASOST 4 4',
        '0000692916 Day 1 5 5', '0000692917 Day 1 3 6', '0000692918 CC    11 11', '0000692919 CC    1 2', '0000692920 EURO  1 1',
        '0000692921 Day 3 24 25', '0000692922 Day 3 25 25', '0000692923 Day 3 25 25', '0000692924 Day 3 25 25', '0000692925 Day 3 25 25',
        '0000692926 Day 3 25 25', '0000692927 Day 3 25 25', '0000692928 Day 3 25 25', '0000692929 Day 3 21 25', '0000692930 Day 3 25 25',
        '0000692931 Day 3 24 25', '0000692932 Day 3 24 24', '0000692933 Day 3 11 24', '0000692934 Day 3 11 25', '0000692935 Day 3 9 25',
        '0000692936 Day 3 7 25', '0000692937 Day 3 9 25', '0000692938 Day 3 5 15'] },
      list4: { items: ['0000692914 JLSTD 4 4'] },
      list5: { items: ['0000692947 GENXD 1 1', '0000692948 NEXT  2 2', '0000692949 ASOST 27 27', '0000692950 Day 1 1 1', '0000692951 Day 1 1 2',
        '0000692953 CC    1 3', '0000692954 EURO  1 1', '0000692955 EURO  1 5', '0000692956 Day 3 19 23', '0000692957 Day 3 15 45', '0000692958 Day 3 6 34'] }
    };
    Object.entries(lists).forEach(([id, list]) => {
      document.getElementById(id).innerHTML = list.items
        .map((t, i) => `<li${i === 0 && !list.plain ? ' class="picked"' : ''}>${t}</li>`).join('');
    });

    // sheet rows
    const cols = 'BCDEFGHIJKLM'.split('');
    const colour = { B: 'blue', C: 'blue', D: 'blue', E: 'pink', F: 'pink', G: 'pink', H: 'magenta', I: 'magenta', J: 'amber', K: 'amber', L: 'green', M: 'green' };
    const data = {};
    [25, 25, 25, 24, 24, 25, 25, 25, 25, 15].forEach((n, i) => {
      data[3246 + i] = { A: '30/04/2025', E: 692929 + i, F: 'DAY 3', G: n };
    });
    data[3256] = { A: '30/04/2025', E: 1369949, F: 'SG', G: 46, H: 'Y', I: 'Y' };
    ['', 1, '', 27, 1, 2, 3, 1, 5, 23, 45, 34].forEach((n, i) => {
      if (i > 0) data[3256 + i] = { A: String(i).padStart(2, '0') + '/05/2025', D: n };
    });
    Object.assign(data[3257], { B: 692947, C: 'GENXD' });
    Object.assign(data[3258], { J: 692948, K: 2 });

    let html = '';
    for (let r = 3246; r <= 3270; r++) {
      const row = data[r] || {};
      const picked = r >= 3256 && r <= 3267;
      html += `<tr><th class="${picked ? 'sel' : ''}">${r}</th><td class="date${picked && r > 3256 ? ' shade' : ''}">${row.A || ''}</td>`;
      cols.forEach(c => {
        const cls = r === 3256 && 'EFG'.includes(c) ? 'magenta' : colour[c];
        html += `<td class="${cls}">${row[c] || ''}</td>`;
      });
      html += '<td class="blank"></td></tr>';
    }
    document.getElementById('rows').innerHTML = html;

    // auto fill menu, underline marks the access key
    const options = ['<u>C</u>opy Cells', 'Fill <u>S</u>eries', 'Fill <u>F</u>ormatting Only', 'Fill With<u>o</u>ut Formatting', 'Fill <u>D</u>ays', 'Fill <u>W</u>eekdays', 'Fill <u>M</u>onths', 'Fill <u>Y</u>ears', '<u>F</u>lash Fill'];
    document.getElementById('fillMenu').innerHTML = options
      .map((o, i) => `<label class="${i === 0 ? 'hover' : ''}"><span class="radio-box"><input type="radio" name="fill"${i === 1 ? ' checked' : ''}></span><span>${o}</span></label>`).join('');
  </script>
</body>
</html>
```
FILE: styles.css
```css
* {
  box-sizing: border-box;
}

html, body {
  margin: 0;
  height: 100%;
  overflow: hidden;
  font-family: "Open Sans", "Segoe UI", sans-serif;
  font-size: 11px;
  color: #222;
}

body {
  display: flex;
  flex-direction: column;
}

button, input, select {
  font: inherit;
  color: inherit;
  border: 0;
  padding: 0;
  background: none;
}

svg {
  display: block;
  flex: none;
}

.sprite { position: absolute; width: 0; height: 0; }
.i8 { width: 8px; height: 8px; }
.i10 { width: 10px; height: 10px; }
.i12 { width: 12px; height: 12px; }
.i14 { width: 14px; height: 14px; }
.i16 { width: 16px; height: 16px; overflow: visible; }
.i28 { width: 28px; height: 28px; }
.off { color: #b5b5b5; }

/* windows */
.desktop {
  position: relative;
  flex: 1;
  overflow: hidden;
}

.window {
  position: absolute;
  isolation: isolate;
  display: flex;
  flex-direction: column;
  overflow: hidden;
}

.back {
  inset: 0;
  background: #efefef;
}

.front {
  left: 46px;
  top: 50px;
  bottom: 62px;
  width: 696px;
  background: #f0f0f0;
  border: 1px solid #7a7a7a;
  border-radius: 8px;
  box-shadow: 0 20px 36px rgba(0, 0, 0, 0.45);
}

.excel {
  left: 704px;
  top: 5px;
  right: 0;
  bottom: 2px;
  background: #e4e5e8;
  border: 1px solid #107c41;
  border-radius: 8px;
  box-shadow: 0 8px 24px rgba(0, 0, 0, 0.35);
}

/* title bar */
.titlebar {
  display: flex;
  align-items: center;
  height: 48px;
  padding-left: 16px;
}

.word .titlebar {
  padding-left: 15px;
  color: #b0b0b0;
}

.quick {
  display: flex;
  align-items: center;
  gap: 14px;
  white-space: nowrap;
}

.excel .quick { flex: 1; }

.autosave {
  display: flex;
  align-items: center;
  gap: 8px;
  margin-left: 2px;
}

.autosave input {
  position: absolute;
  opacity: 0;
}

.toggle {
  display: flex;
  align-items: center;
  gap: 5px;
  width: 44px;
  height: 20px;
  padding-left: 3px;
  border: 1px solid currentColor;
  border-radius: 10px;
  background: #fff;
}

.toggle::before {
  content: "";
  width: 14px;
  height: 14px;
  border-radius: 50%;
  background: currentColor;
}

.excel .toggle { color: #5c5c5c; }

.split {
  display: flex;
  align-items: center;
  gap: 1px;
}

.custom { margin: 0 11px 0 2px; }

.save {
  color: #9b3aa8;
  --fill: #d9a3e0;
  --fill2: #fff;
}

.doc-name {
  display: flex;
  align-items: center;
  gap: 4px;
}

.search {
  display: flex;
  align-items: center;
  gap: 12px;
  height: 31px;
  padding: 0 14px;
  border: 1px solid #d4d4d4;
  border-bottom-width: 2px;
  border-radius: 4px;
  font-size: 12px;
}

.search input {
  flex: 1;
  min-width: 0;
}

.search input::placeholder, .task-search input::placeholder {
  color: inherit;
  opacity: 1;
}

.word .search {
  flex: 1;
  margin-left: 50px;
}

.excel .search {
  flex: 0 0 326px;
  background: #fafafa;
  color: #666;
}

.winbtns {
  display: flex;
  flex: 1;
  justify-content: flex-end;
}

.winbtns button {
  display: grid;
  place-items: center;
  width: 48px;
  height: 32px;
}

.avatar {
  width: 24px;
  height: 24px;
  line-height: 24px;
  border-radius: 50%;
  background: #c239b3;
  color: #fff;
  text-align: center;
}

/* tabs */
.tabs {
  display: flex;
  align-items: center;
  gap: 22px;
  height: 30px;
  padding: 0 11px 0 21px;
  font-size: 12px;
}

.excel .tabs { gap: 23px; }

.tabs > button:first-child { margin-right: 3px; }

.tabs .active {
  margin-top: 4px;
  border-bottom: 2px solid #185abd;
  font-weight: 600;
}

.excel .tabs .active { border-color: #107c41; }

.tab-actions {
  display: flex;
  gap: 9px;
  margin-left: auto;
}

.tab-actions button {
  display: flex;
  align-items: center;
  gap: 3px;
  height: 24px;
  padding: 0 4px;
  border-radius: 4px;
}

.comments {
  background: #fff;
  border: 1px solid #7a7a7a;
}

.tab-actions .share {
  background: #107c41;
  color: #fff;
}

.share .i8 { margin-left: 3px; }

/* ribbon */
.ribbon {
  display: flex;
  flex: none;
  height: 100px;
  margin: 0 8px;
  padding: 3px 0 1px;
  border-radius: 8px;
  background: #fff;
  box-shadow: 0 1px 3px rgba(0, 0, 0, 0.25);
}

.front .ribbon {
  position: relative;
  z-index: 1;
  margin: 0 0 0 7px;
  border-radius: 8px 0 0 8px;
}

.group {
  display: flex;
  flex-direction: column;
  flex: none;
  position: relative;
}

.group::after {
  content: "";
  position: absolute;
  right: 0;
  top: 2px;
  bottom: 5px;
  border-right: 1px solid #d0d0d0;
}

.body {
  display: flex;
  height: 78px;
  padding-left: 8px;
}

.mid {
  justify-content: center;
  padding-left: 0;
}

.w-clip { width: 88px; }
.w-font { width: 235px; }
.w-para { width: 72px; }
.w-styles { width: 58px; }
.w-edit { width: 55px; }
.w-sens { width: 74px; }
.x-clip { width: 112px; }
.x-font { width: 161px; }
.x-align { width: 142px; }
.x-num { width: 108px; }
.x-styles { width: 183px; }
.x-cells { width: 107px; }
.x-editing { width: 106px; }
.x-addins { width: 63px; }

.x-styles .body, .x-cells .body { padding-left: 12px; }
.x-editing .body { gap: 9px; }

.label {
  display: flex;
  align-items: center;
  height: 18px;
  padding-right: 4px;
}

.label span {
  flex: 1;
  text-align: center;
}

.row {
  display: flex;
  align-items: center;
  height: 26px;
}

.gap { gap: 3px; }

.big {
  display: flex;
  flex-direction: column;
  align-items: center;
  width: 50px;
  padding-top: 5px;
  line-height: 16px;
}

.mid .big { width: auto; }
.big .i28 { margin-bottom: 6px; }
.big .i8 { margin-top: 3px; }
.w-clip .big, .x-clip .big { padding-top: 6px; }

.faded {
  --edge: #bdbdbd;
  --board: #ededed;
  --line: #b5b5b5;
}

.ib {
  display: flex;
  align-items: center;
  justify-content: center;
  width: 26px;
  height: 24px;
  font-size: 13px;
  color: #444;
}

.ib.off { color: #b5b5b5; }
.ib.on { border: 1px solid #777; border-radius: 4px; background: #e8e8e8; }
.ib.wide { width: 30px; }
.ib i { font-family: "Liberation Serif", serif; font-size: 15px; }
.ib sub, .ib sup { font-size: 8px; color: #1e8bcd; }
.ib sub { align-self: flex-end; }
.ib sup { align-self: flex-start; }
.ib.tint { --b: #1e8bcd; }
.ib.pct { font-size: 18px; }

.dd {
  display: grid;
  place-items: center;
  width: 12px;
  height: 24px;
}

.dd.push { margin-left: 3px; }

.sep {
  width: 1px;
  height: 24px;
  margin: 0 3px;
  background: #d0d0d0;
}

.sep.tight { margin: 0; }

.combo {
  position: relative;
  height: 24px;
}

.combo select {
  appearance: none;
  width: 100%;
  height: 100%;
  padding-left: 4px;
  border: 1px solid #8a8a8a;
  border-radius: 4px;
  background: #fff;
}

.combo svg {
  position: absolute;
  right: 3px;
  top: 8px;
}

.combo-wide { width: 173px; }
.combo-mid { width: 101px; }
.combo-size { width: 43px; }
.combo-num { width: 92px; }

.cmd {
  display: flex;
  align-items: center;
  gap: 4px;
  white-space: nowrap;
}

.far .i8 { margin-left: 12px; }

.collapse {
  align-self: flex-end;
  margin: 0 8px 8px auto;
}

/* documents */
.back-page {
  display: flex;
  flex: 1;
  align-items: flex-end;
  border-bottom: 1px solid #fff;
}

.back-row {
  display: flex;
  height: 52px;
  padding-left: 46px;
}

.back-cell {
  width: 511px;
  padding-left: 350px;
  border-right: 1px solid #888;
  font-size: 12px;
  line-height: 20px;
}

.back-cell + .back-cell { padding-left: 116px; }

.canvas {
  flex: 1;
  min-height: 0;
  padding-left: 37px;
  overflow: hidden;
}

.page {
  height: 100%;
  padding-left: 94px;
  border-left: 1px solid #bbb;
  background: #fff;
}

.snips {
  display: flex;
  align-items: flex-end;
}

.first { height: 60px; }
.second { margin-top: 19px; }
.third { padding: 7px 0 0 3px; }

.drop {
  flex: none;
  width: 198px;
  margin: 0;
  padding: 0;
  list-style: none;
  border: 1px solid #0078d7;
  background: #fff;
  box-shadow: 4px 4px 4px rgba(0, 0, 0, 0.45);
}

.drop, .under {
  font-family: "Liberation Sans", Arial, sans-serif;
  color: #000;
}

.narrow { width: 194px; }

.drop li {
  height: 14px;
  padding-left: 2px;
  line-height: 14px;
  white-space: pre;
}

.drop .picked {
  height: 18px;
  border-top: 4px solid #cce4f7;
  background: #0078d7;
  color: #fff;
}

/* strip of an older list showing below the newer one */
.under {
  display: flex;
  align-items: flex-end;
  height: 4px;
  margin-bottom: -4px;
  padding-left: 5px;
  overflow: hidden;
  line-height: 14px;
}

.scrap {
  align-self: stretch;
  overflow: hidden;
}

.scrap i {
  display: block;
  font: 11px/16px "Liberation Sans", Arial, sans-serif;
}

.scrap-left { width: 4px; }
.scrap-d { width: 12px; }
.scrap-right { width: 9px; }
.h4 { height: 4px; }
.h9 { height: 9px; }
.h12 { height: 12px; }
.h14 { height: 14px; }
.h18 { height: 18px; }
.h27 { height: 27px; }
.red { background: #f00; }
.darkred { background: #c00000; }
.orange { background: #cc6600; border-bottom: 1px solid #663300; }
.brown { background: #a63a00; border-bottom: 1px solid #4a1a00; }
.grey { background: #c4c4c4; }

.scrap .note {
  height: 18px;
  padding-left: 3px;
  border-bottom: 1px solid #555;
  background: #ffffb0;
  color: #222;
}

.scrap-right .note { padding-left: 1px; }

.scrap .word-bit {
  height: 29px;
  padding-top: 6px;
  border-bottom: 1px solid #777;
  color: #003;
}

/* status bars */
.status {
  display: flex;
  flex: none;
  align-items: center;
  gap: 18px;
  height: 21px;
  padding-left: 11px;
  background: #f4f4f4;
  white-space: nowrap;
}

.access {
  display: flex;
  align-items: center;
  gap: 2px;
  font-weight: 600;
}

.views {
  display: flex;
  align-items: center;
  align-self: stretch;
  margin-left: auto;
}

.focus {
  display: flex;
  align-items: center;
  gap: 2px;
  margin-right: 12px;
}

.view {
  display: grid;
  place-items: center;
  width: 40px;
  height: 100%;
}

.view.on { background: #dedede; }
.stat { margin-right: 17px; }

.zoom {
  appearance: none;
  width: 100px;
  height: 13px;
  margin: 0 5px;
  background: linear-gradient(#666, #666) center / 100% 1px no-repeat;
}

.zoom::-webkit-slider-thumb {
  appearance: none;
  width: 5px;
  height: 12px;
  background: #5f5f5f;
}

.zoom-btn { margin-left: 5px; }
.zoom-btn + .zoom { margin-left: 4px; }
.zoom + .zoom-btn { margin-left: 0; }
.pct-label { margin: 0 18px 0 14px; }

/* formula bar */
.formula-bar {
  display: flex;
  align-items: center;
  gap: 5px;
  height: 25px;
  margin: 8px 7px 8px 8px;
  font-size: 12px;
}

.box {
  display: flex;
  align-items: center;
  height: 25px;
  padding: 0 5px;
  border: 1px solid #d4d4d4;
  border-radius: 4px;
  background: #fff;
}

.name-box { width: 102px; }

.box input {
  flex: 1;
  min-width: 0;
}

.grip {
  width: 10px;
  height: 16px;
}

.fx {
  gap: 8px;
  width: 85px;
  padding: 0 2px 0 4px;
}

.fx-sign {
  font: italic 18px/18px "Liberation Serif", serif;
  margin-right: -6px;
}

.formula {
  flex: 1;
  padding-left: 9px;
}

/* sheet */
.sheet-area {
  display: flex;
  flex: 1;
  gap: 3px;
  min-height: 0;
}

.sheet {
  position: relative;
  flex: 1;
  overflow: hidden;
  font-family: Lato, Calibri, sans-serif;
}

.grid {
  width: 100%;
  table-layout: fixed;
  border-collapse: separate;
  border-spacing: 0;
  font-size: 16px;
  line-height: 20px;
  color: #000;
}

.c-head { width: 43px; }
.c-a { width: 113px; }
.c-b { width: 120px; }
.c-d { width: 97px; }
.c-e { width: 93px; }
.c-f { width: 69px; }
.c-j { width: 87px; }
.c-l { width: 99px; }
.c-74 { width: 74px; }

.grid th, .grid td {
  height: 23px;
  padding: 0;
  text-align: center;
  overflow: hidden;
}

.grid th {
  background: #efefef;
  color: #444;
  font-weight: 400;
  border-right: 1px solid #d4d4d4;
  border-bottom: 1px solid #d4d4d4;
}

.grid thead th { border-bottom-color: #ababab; }
.grid tbody th { border-right-color: #ababab; }

.grid th.sel {
  background: #dfdfdf;
  color: #217346;
}

.grid thead th.sel { border-bottom: 2px solid #107c41; }

.grid .corner {
  background: linear-gradient(135deg, #efefef 70%, #d0d0d0 70%);
}

.grid td {
  border-right: 1px solid #000;
  border-bottom: 1px solid #000;
}

.grid .frozen td {
  font-size: 24px;
  line-height: 36px;
  font-weight: 700;
  border-bottom-color: #999;
}

.grid .frozen td:last-child, .grid td.blank {
  border-right: 0;
  border-bottom-color: #dcdcdc;
  background: #fff;
}

.grid .frozen tr:first-child td:last-child { border-bottom-color: #dcdcdc; }
.grid .frozen tr:last-child > * { border-bottom-color: #999; }
.grid .frozen .xl { font-size: 34px; }
.grid .month { background: #f2f2f2; }
.grid .date { background: #fff; font-weight: 700; }
.grid .shade { background: #c8c8c8; }
.blue { background: #66ccff; }
.pink { background: #ff99ff; }
.magenta { background: #dc44b3; }
.amber { background: #ffc000; }
.green { background: #92d050; }

/* outline of the selected range */
.selection {
  position: absolute;
  left: 42px;
  top: 412px;
  width: 115px;
  height: 279px;
  border: 2px solid #217346;
}

.selection::after {
  content: "";
  position: absolute;
  right: -4px;
  bottom: -4px;
  width: 6px;
  height: 6px;
  border: 1px solid #fff;
  border-width: 1px 0 0 1px;
  background: #217346;
}

.fill-menu {
  position: absolute;
  left: 157px;
  top: 481px;
  width: 181px;
  margin: 0;
  padding: 0 1px 1px;
  border: 1px solid #c6c6c6;
  background: #fff;
  box-shadow: 2px 2px 3px rgba(0, 0, 0, 0.25);
  font: 12px/21px "Open Sans", sans-serif;
  color: #555;
}

.fill-menu label {
  display: flex;
  align-items: center;
  gap: 12px;
  height: 23px;
  border: 1px solid transparent;
}

.fill-menu .hover {
  border-color: #86bfa0;
  background: #d3f0e0;
}

.radio-box {
  display: grid;
  place-items: center;
  width: 20px;
  height: 20px;
  border: 1px solid transparent;
}

.radio-box:has(:checked) {
  border-color: #4b9b72;
  background: #86bfa0;
}

.radio-box input {
  appearance: none;
  width: 11px;
  height: 11px;
  margin: 0;
  border: 1px solid #666;
  border-radius: 50%;
  background: #fff;
}

.radio-box input:checked {
  background: radial-gradient(#777 2px, #fff 3px);
}

.fill-btn {
  position: absolute;
  left: 157px;
  top: 691px;
  display: flex;
  align-items: center;
  gap: 6px;
  width: 34px;
  height: 23px;
  padding-left: 2px;
  border: 1px solid #4b9b72;
  background: #86bfa0;
}

.tri { width: 6px; height: 4px; }

.vscroll {
  display: flex;
  flex-direction: column;
  align-items: center;
  gap: 6px;
  width: 17px;
  margin-right: 2px;
  padding: 3px 0;
  border-radius: 8px;
  background: #f5f5f5;
}

.vscroll .thumb {
  width: 9px;
  height: 17px;
  border-radius: 4px;
  background: #707070;
}

.end { margin-top: auto; }

.sheet-tabs {
  display: flex;
  align-items: center;
  height: 33px;
  padding-left: 16px;
  border-bottom: 1px solid #fff;
}

.nav {
  display: grid;
  place-items: center;
  width: 32px;
  height: 28px;
}

.sheet-tab {
  align-self: flex-start;
  height: 28px;
  margin-left: 4px;
  padding: 0 9px;
  border-radius: 0 0 5px 5px;
  background: #fff;
  font-size: 13px;
  font-weight: 600;
}

.sheet-tab span {
  display: block;
  border-bottom: 2px solid #107c41;
  line-height: 22px;
}

.add {
  margin-left: 4px;
  padding: 0 42px;
  border-left: 1px solid #ccc;
}

.sheet-tabs .grip { margin-left: auto; }

.hscroll {
  display: flex;
  align-items: center;
  gap: 4px;
  width: 446px;
  height: 17px;
  margin: 0 21px 0 11px;
  padding: 0 5px;
  border-radius: 8px;
  background: #f5f5f5;
}

.track { flex: 1; }

.hscroll .thumb {
  width: 63%;
  height: 9px;
  border-radius: 4px;
  background: #707070;
}

/* taskbar */
.taskbar {
  display: flex;
  align-items: center;
  flex: none;
  height: 48px;
  padding-left: 20px;
  background: #202020;
  color: #ddd;
}

.start svg {
  width: 24px;
  height: 24px;
}

.task-search {
  display: flex;
  align-items: center;
  gap: 10px;
  width: 220px;
  height: 32px;
  margin: 0 2px 0 13px;
  padding-left: 12px;
  border: 1px solid #555;
  border-radius: 16px;
  background: #3b3b3b;
  font-size: 13px;
}

.task-search svg { width: 15px; height: 15px; }
.task-search input { width: 150px; }

.app {
  position: relative;
  display: grid;
  place-items: center;
  width: 40px;
  height: 40px;
  margin: 0 2px;
}

.app > svg { width: 24px; height: 24px; }

.app::after {
  content: "";
  position: absolute;
  bottom: 1px;
  width: 6px;
  height: 3px;
  border-radius: 2px;
  background: #9a9a9a;
}

.idle::after { display: none; }

.current {
  border-radius: 4px;
  background: #333;
}

.current::after {
  width: 16px;
  background: #13a10e;
}

.badge {
  position: absolute;
  right: 3px;
  top: 4px;
  width: 14px;
  height: 14px;
  border-radius: 50%;
  background: #13a10e;
}

.clock {
  display: flex;
  flex-direction: column;
  margin: 0 23px 0 auto;
  line-height: 16px;
  text-align: right;
}
```
